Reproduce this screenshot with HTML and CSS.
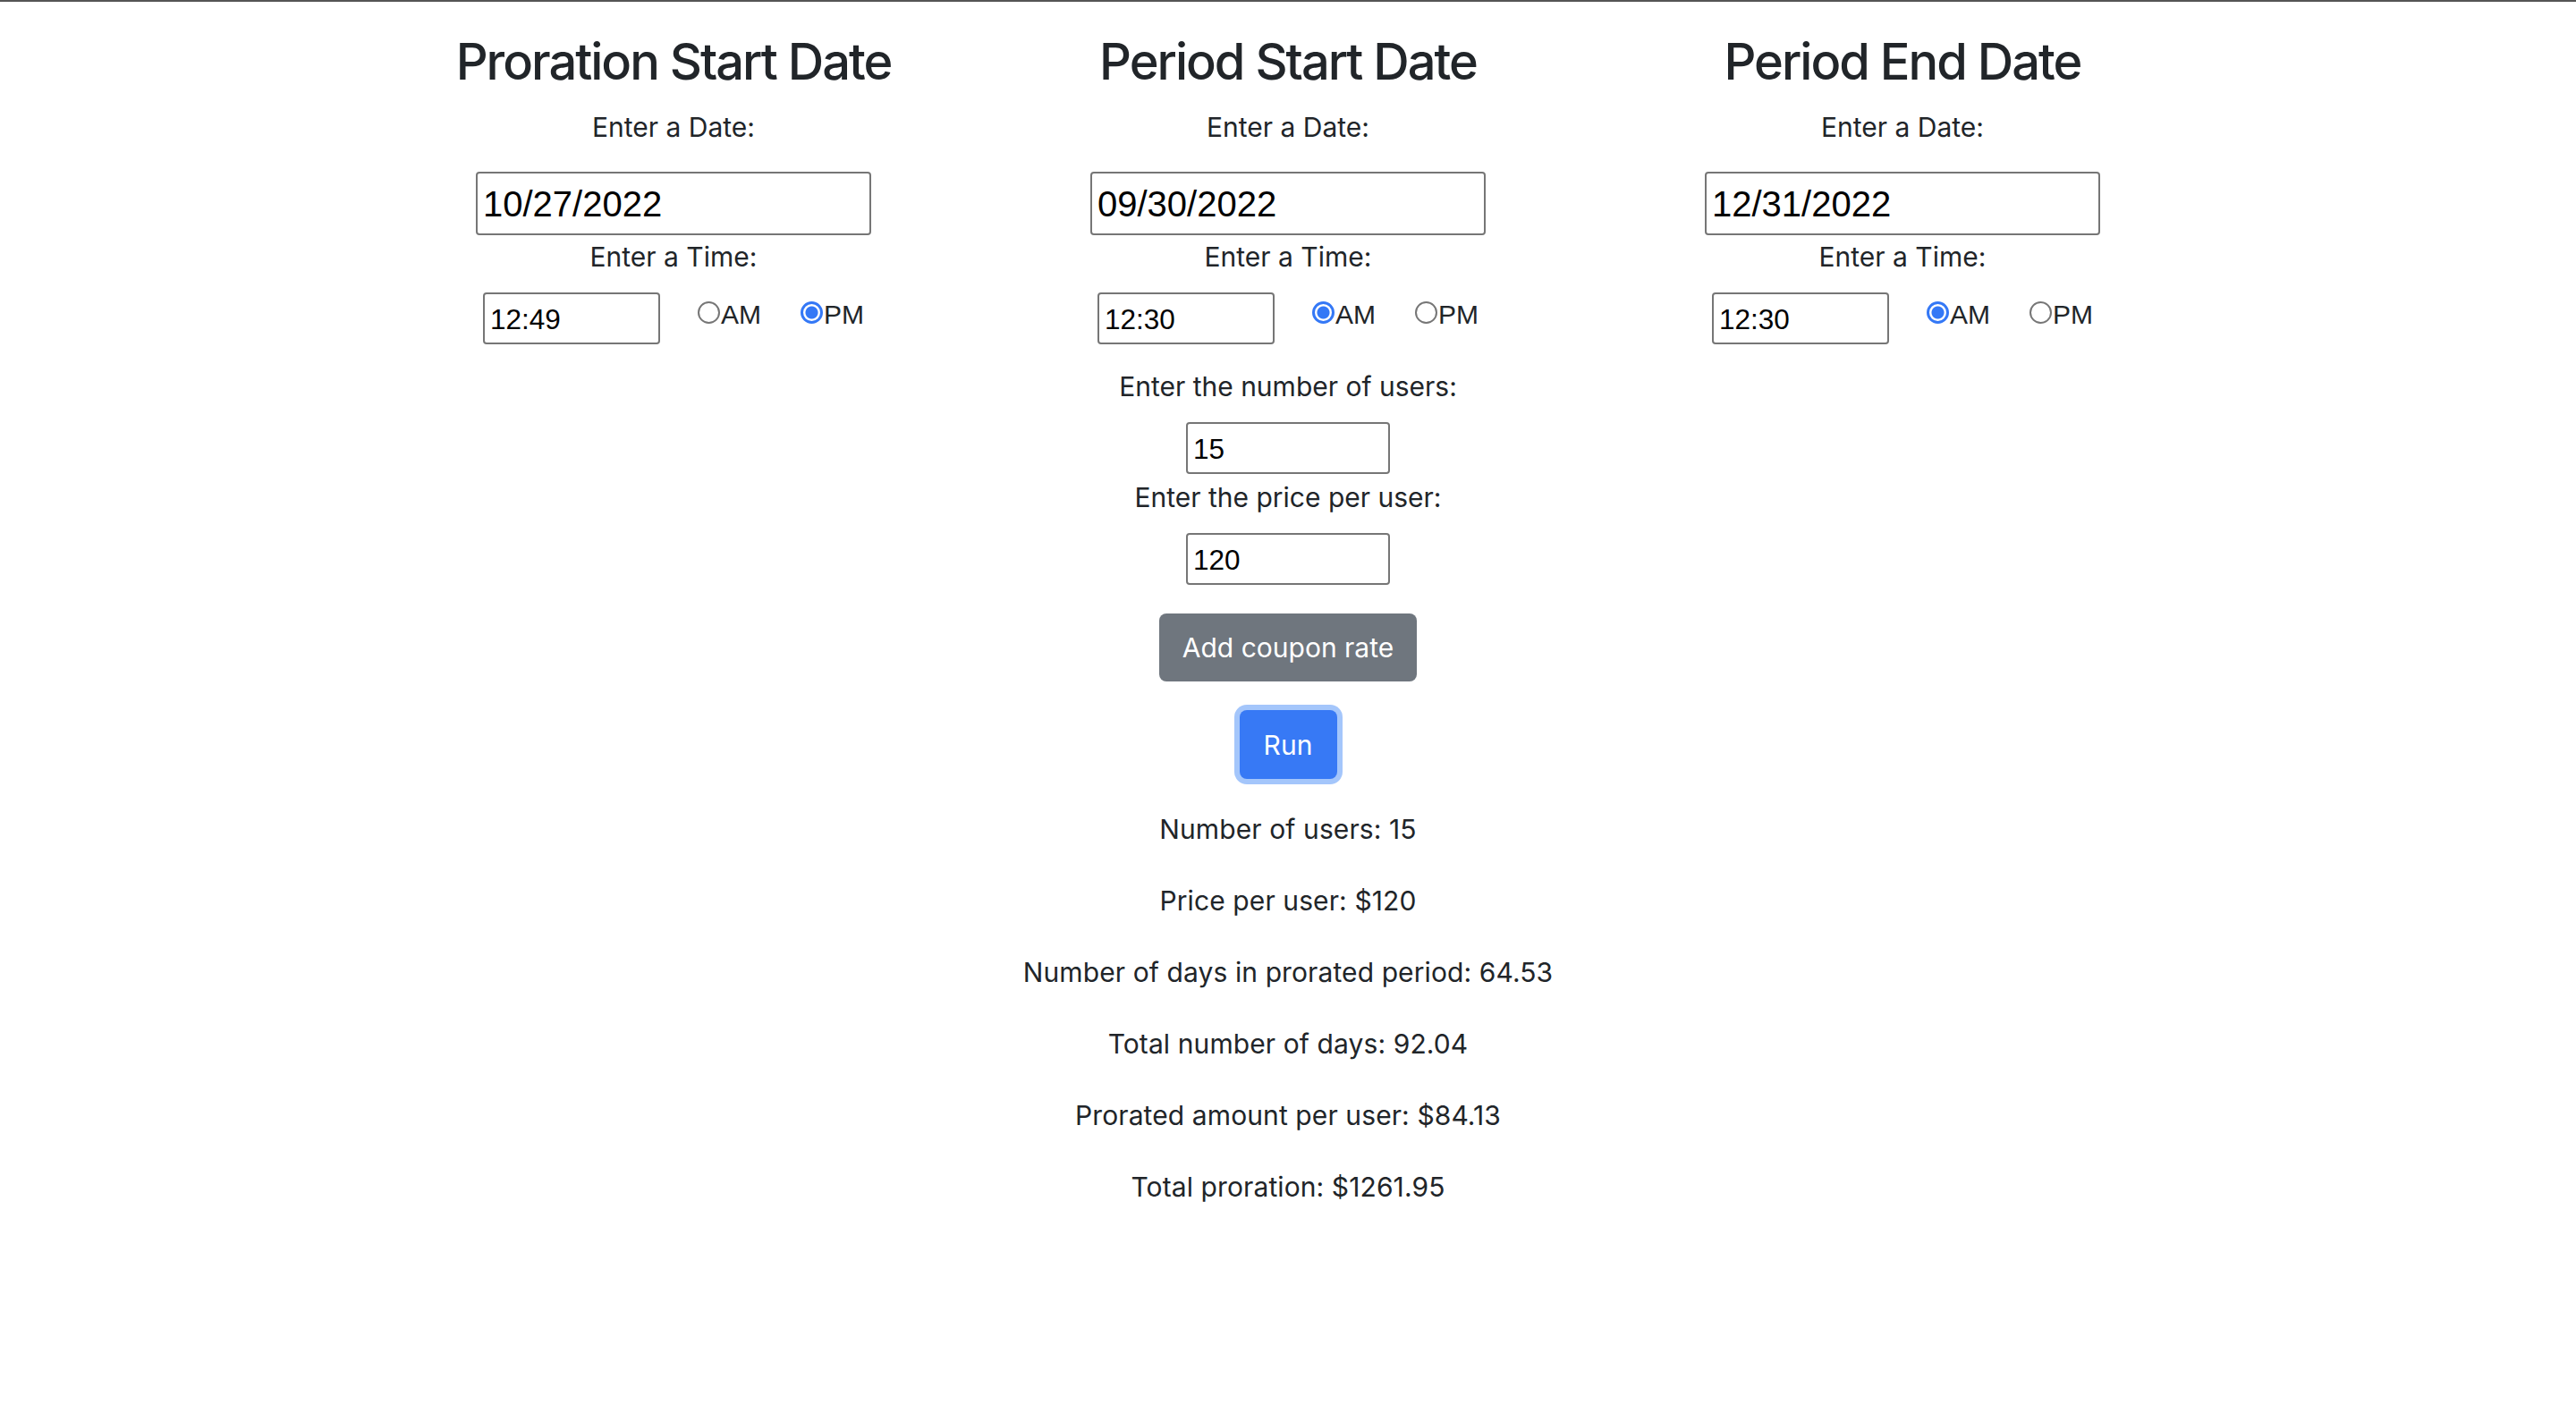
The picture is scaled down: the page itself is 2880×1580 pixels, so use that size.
FILE: index.html
```html
<!DOCTYPE html>
<html lang="en">
<head>
<meta charset="utf-8">
<title>Proration Calculator</title>
<link rel="stylesheet" href="styles.css">
</head>
<body>
<div class="topbar"></div>
<main class="grid">
  <section class="col">
    <h3 class="title">Proration Start Date</h3>
    <label class="lbl">Enter a Date:</label>
    <input class="field date" type="text" value="10/27/2022">
    <label class="lbl">Enter a Time:</label>
    <div class="time-row">
      <input class="field time" type="text" value="12:49">
      <label class="radio first"><input type="radio" name="ap1">AM</label>
      <label class="radio"><input type="radio" name="ap1" checked>PM</label>
    </div>
  </section>

  <section class="col">
    <h3 class="title">Period Start Date</h3>
    <label class="lbl">Enter a Date:</label>
    <input class="field date" type="text" value="09/30/2022">
    <label class="lbl">Enter a Time:</label>
    <div class="time-row">
      <input class="field time" type="text" value="12:30">
      <label class="radio first"><input type="radio" name="ap2" checked>AM</label>
      <label class="radio"><input type="radio" name="ap2">PM</label>
    </div>

    <label class="lbl users-lbl">Enter the number of users:</label>
    <input class="field small" type="text" value="15">
    <label class="lbl price-lbl">Enter the price per user:</label>
    <input class="field small" type="text" value="120">

    <button class="btn btn-secondary" type="button">Add coupon rate</button>
    <button class="btn btn-primary" type="button">Run</button>

    <div class="results">
      <p>Number of users: 15</p>
      <p>Price per user: $120</p>
      <p>Number of days in prorated period: 64.53</p>
      <p>Total number of days: 92.04</p>
      <p>Prorated amount per user: $84.13</p>
      <p>Total proration: $1261.95</p>
    </div>
  </section>

  <section class="col">
    <h3 class="title">Period End Date</h3>
    <label class="lbl">Enter a Date:</label>
    <input class="field date" type="text" value="12/31/2022">
    <label class="lbl">Enter a Time:</label>
    <div class="time-row">
      <input class="field time" type="text" value="12:30">
      <label class="radio first"><input type="radio" name="ap3" checked>AM</label>
      <label class="radio"><input type="radio" name="ap3">PM</label>
    </div>
  </section>
</main>
</body>
</html>
```

FILE: styles.css
```css
* {
  box-sizing: border-box;
}

html, body {
  margin: 0;
  padding: 0;
  background: #ffffff;
}

body {
  font-family: Inter, "Noto Sans", sans-serif;
  font-size: 30px;
  color: #212529;
}

.topbar {
  height: 2px;
  background: #555555;
}

.grid {
  display: grid;
  grid-template-columns: repeat(3, 687px);
  justify-content: center;
  padding-top: 34px;
}

.col {
  display: flex;
  flex-direction: column;
  align-items: center;
}

.title {
  margin: 0 0 15px;
  font-size: 56px;
  line-height: 67px;
  font-weight: 500;
  letter-spacing: -2px;
  white-space: nowrap;
}

.lbl {
  display: block;
  line-height: 48px;
  white-space: nowrap;
}

.field {
  font-family: "Liberation Sans", Arial, sans-serif;
  color: #000;
  border: 2px solid #767676;
  border-radius: 4px;
  background: #fff;
  margin: 0;
  outline: none;
}

.date {
  width: 442px;
  height: 71px;
  margin-top: 26px;
  font-size: 40px;
  padding: 2px 6px 0;
}

.time-row {
  display: flex;
  align-items: flex-start;
  margin-top: 16px;
}

.time {
  width: 198px;
  height: 58px;
  font-size: 31.5px;
  padding: 3px 6px 0;
}

.radio {
  display: flex;
  align-items: flex-start;
  margin-top: 8px;
  margin-left: 44px;
  font-family: "Liberation Sans", Arial, sans-serif;
  font-size: 30px;
  line-height: 34px;
  color: #212529;
}

.radio.first {
  margin-left: 42px;
}

.radio input {
  appearance: none;
  -webkit-appearance: none;
  width: 25px;
  height: 25px;
  margin: 2px 1px 0 0;
  border: 2px solid #767676;
  border-radius: 50%;
  background: #fff;
}

.radio input:checked {
  border: 3px solid #3478f6;
  background: radial-gradient(circle, #3478f6 0 6.5px, #ffffff 7.5px);
}

.users-lbl {
  margin-top: 23px;
}

.small {
  width: 228px;
  height: 58px;
  margin-top: 16px;
  font-size: 31.5px;
  padding: 2px 6px 0;
}

.price-lbl {
  margin-top: 2px;
}

.btn {
  font-family: Inter, "Noto Sans", sans-serif;
  font-size: 30px;
  color: #fff;
  border: none;
  border-radius: 8px;
  height: 76px;
  line-height: 76px;
  padding: 0 26px;
}

.btn-secondary {
  background: #6f767e;
  margin-top: 32px;
}

.btn-primary {
  background: #3779f5;
  margin-top: 32px;
  height: 77px;
  width: 109px;
  padding: 0;
  box-shadow: 0 0 0 6px #a4c6fb;
}

.results {
  margin-top: 32px;
  text-align: center;
}

.results p {
  margin: 0 0 32px;
  line-height: 48px;
  letter-spacing: 0.1px;
  white-space: nowrap;
}
```
